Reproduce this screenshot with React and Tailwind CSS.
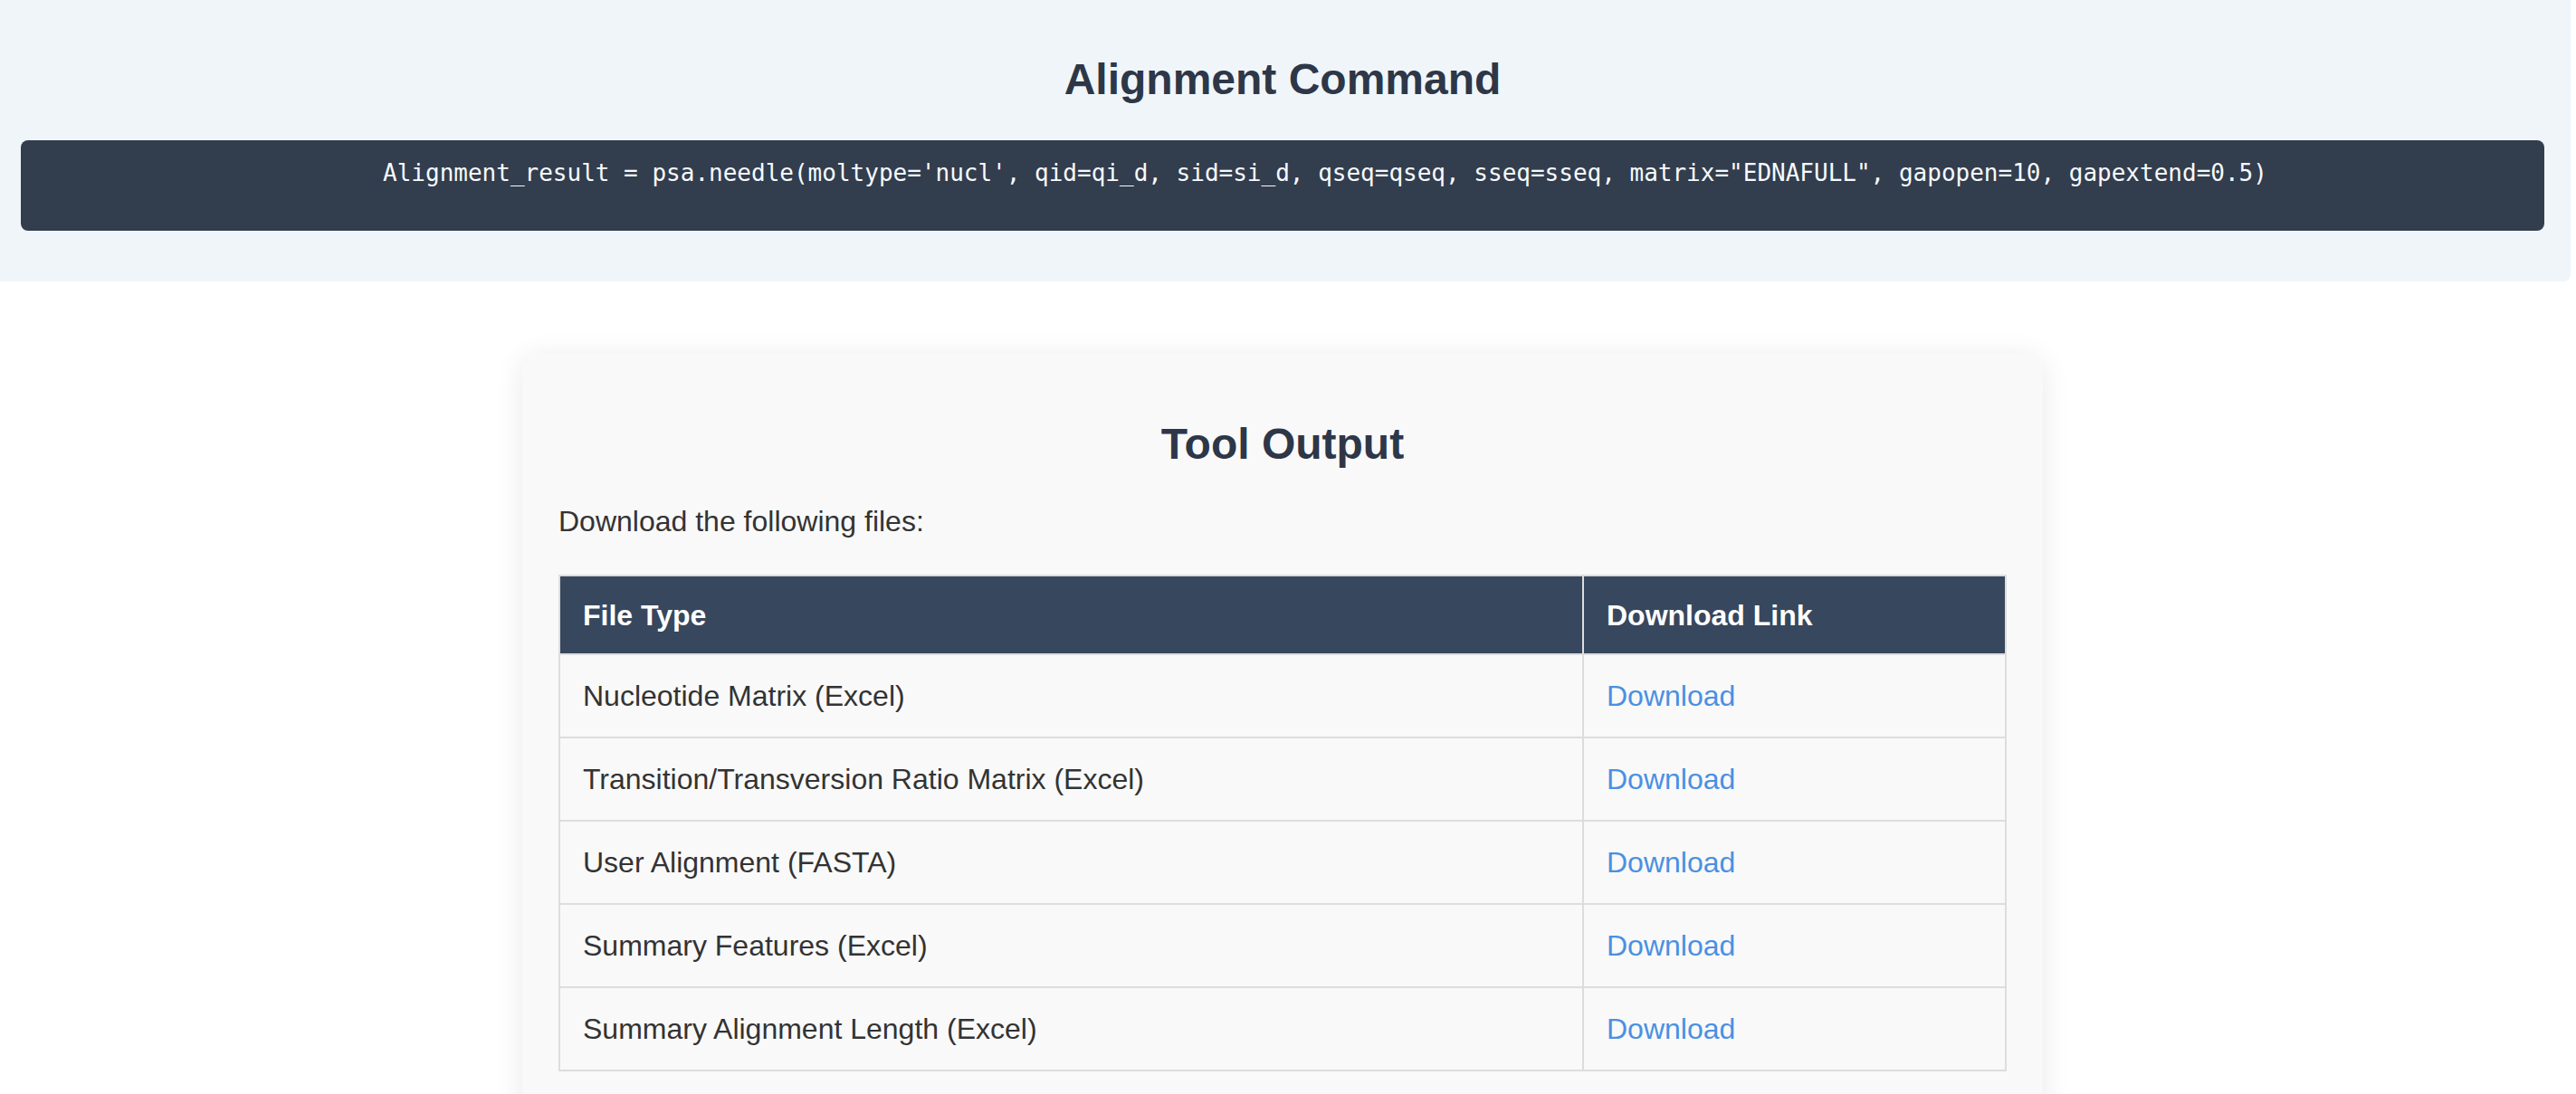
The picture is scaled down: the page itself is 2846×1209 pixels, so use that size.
export default function App() {
  const rows = [
    "Nucleotide Matrix (Excel)",
    "Transition/Transversion Ratio Matrix (Excel)",
    "User Alignment (FASTA)",
    "Summary Features (Excel)",
    "Summary Alignment Length (Excel)",
  ];
  const cmd =
    "      Alignment_result = psa.needle(moltype='nucl', qid=qi_d, sid=si_d, qseq=qseq, sseq=sseq, matrix=\"EDNAFULL\", gapopen=10, gapextend=0.5)";
  return (
    <div className="min-h-screen bg-white font-['Liberation_Sans',Arial,sans-serif]">
      <div className="w-[2840px] bg-[#f0f5f9] rounded-br-[8px] pl-[23px] pr-[29px] pt-[60px] pb-[56px]">
        <h2 className="text-center text-[48px] leading-[55px] font-bold text-[#2d3748]">
          Alignment Command
        </h2>
        <div className="mt-[40px] h-[100px] bg-[#323d4e] rounded-[8px] pt-[21px] text-center">
          <pre className="whitespace-pre font-['DejaVu_Sans_Mono',monospace] text-[26px] leading-[30px] text-[#f7fafc]">
            {cmd}
          </pre>
        </div>
      </div>
      <div className="w-[2834px] pt-[80px] pb-[40px]">
        <div className="mx-auto w-[1680px] bg-[#f9f9f9] rounded-[18px] shadow-[0_4px_32px_rgba(0,0,0,0.09)] px-[40px] pt-[72px] pb-[60px]">
          <h2 className="text-center text-[48px] leading-[55px] font-bold text-[#2d3748]">
            Tool Output
          </h2>
          <p className="mt-[40px] text-[32px] leading-[37px] text-[#333333]">
            Download the following files:
          </p>
          <table className="mt-[40px] w-full table-fixed border-collapse text-[32px] leading-[37px]">
            <colgroup>
              <col className="w-[1131px]" />
              <col />
            </colgroup>
            <thead>
              <tr>
                <th className="border-2 border-[#dddddd] bg-[#37475e] text-white font-bold text-left pl-[25px] pr-[25px] pt-[25px] pb-[23px]">
                  File Type
                </th>
                <th className="border-2 border-[#dddddd] bg-[#37475e] text-white font-bold text-left pl-[25px] pr-[25px] pt-[25px] pb-[23px]">
                  Download Link
                </th>
              </tr>
            </thead>
            <tbody>
              {rows.map((r) => (
                <tr key={r}>
                  <td className="border-2 border-[#dddddd] text-[#333333] pl-[25px] pr-[25px] pt-[27px] pb-[26px]">
                    {r}
                  </td>
                  <td className="border-2 border-[#dddddd] pl-[25px] pr-[25px] pt-[27px] pb-[26px]">
                    <a href="#" className="text-[#4a90e2]">
                      Download
                    </a>
                  </td>
                </tr>
              ))}
            </tbody>
          </table>
        </div>
      </div>
    </div>
  );
}
